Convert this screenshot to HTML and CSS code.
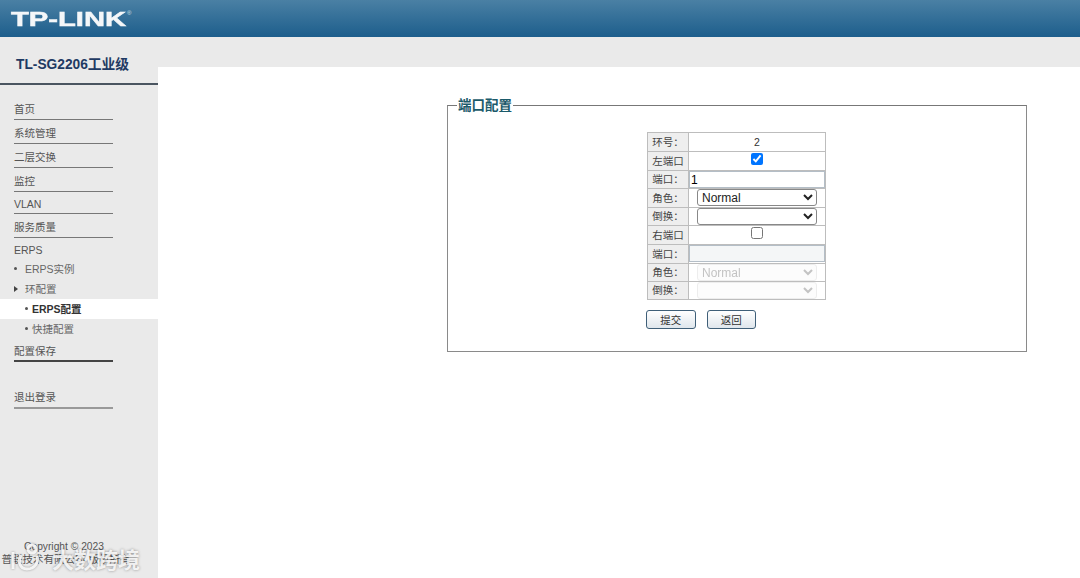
FILE: index.html
```html
<!DOCTYPE html>
<html lang="zh-CN">
  <head>
    <meta charset="UTF-8" />
    <title>TL-SG2206</title>
    <link rel="stylesheet" href="styles.css">
  </head>
  <body>
    <!-- Top banner -->
    <header class="banner">
      <span class="logo">TP-LINK</span><span class="logo-reg">®</span>
    </header>
    <div class="top-gap"></div>

    <div class="page">
      <!-- Left menu -->
      <aside class="sidebar">
        <h1 class="model">TL-SG2206工业级</h1>
        <nav class="menu">
          <a class="item">首页</a>
          <a class="item">系统管理</a>
          <a class="item">二层交换</a>
          <a class="item">监控</a>
          <a class="item short">VLAN</a>
          <a class="item">服务质量</a>
          <a class="item open">ERPS</a>
          <a class="sub"><span class="dot"></span>ERPS实例</a>
          <a class="sub"><span class="arrow"></span>环配置</a>
          <a class="leaf active"><span class="dot"></span>ERPS配置</a>
          <a class="leaf"><span class="dot"></span>快捷配置</a>
          <a class="item save">配置保存</a>
          <a class="item logout">退出登录</a>
        </nav>
        <div class="copyright">
          <div class="copy-en">Copyright © 2023</div>
          <div>普联技术有限公司 版权所有</div>
        </div>
      </aside>

      <!-- Content -->
      <main class="content">
        <fieldset class="panel">
          <legend>端口配置</legend>
          <table class="form-table">
            <tr>
              <th>环号：</th>
              <td class="center ring">2</td>
            </tr>
            <tr>
              <th>左端口</th>
              <td class="center"><input type="checkbox" checked></td>
            </tr>
            <tr class="thin">
              <th>端口：</th>
              <td><input class="text" type="text" value="1"></td>
            </tr>
            <tr>
              <th>角色：</th>
              <td class="center"><select><option>Normal</option></select></td>
            </tr>
            <tr class="thin">
              <th>倒换：</th>
              <td class="center"><select><option></option></select></td>
            </tr>
            <tr>
              <th>右端口</th>
              <td class="center"><input type="checkbox"></td>
            </tr>
            <tr>
              <th>端口：</th>
              <td><input class="text" type="text" disabled></td>
            </tr>
            <tr class="thin">
              <th>角色：</th>
              <td class="center"><select disabled><option>Normal</option></select></td>
            </tr>
            <tr class="thin">
              <th>倒换：</th>
              <td class="center"><select disabled><option></option></select></td>
            </tr>
          </table>
          <div class="actions">
            <button class="btn">提交</button>
            <button class="btn">返回</button>
          </div>
        </fieldset>
      </main>
    </div>

    <!-- Image watermark -->
    <div class="watermark">
      <svg class="wm-icon" width="36" height="30" viewBox="0 0 36 30">
        <path d="M5 9v17" />
        <path d="M13 12c-3 5-2 14 6 14 8 0 12-7 10-13" />
        <circle cx="24" cy="6" r="4" />
      </svg>
      <span>大数跨境</span>
    </div>
  </body>
</html>
```

FILE: styles.css
```css
* {
  margin: 0;
  padding: 0;
  box-sizing: border-box;
}

html,
body {
  height: 100%;
}

body {
  position: relative;
  display: flex;
  flex-direction: column;
  overflow: hidden;
  background-color: #eaeaea;
  font-family: "Liberation Sans", "Noto Sans CJK SC", sans-serif;
  font-size: 12px;
  color: #333;
}

/* Top banner */
.banner {
  height: 37px;
  flex: none;
  padding-left: 11px;
  background: linear-gradient(#4a80a4, #1d5e8c);
  display: flex;
  align-items: flex-start;
}

.logo {
  width: 79px;
  margin-top: 7px;
  font-size: 20px;
  line-height: 24px;
  font-weight: bold;
  color: #f4f7f9;
  -webkit-text-stroke: 0.5px #f4f7f9;
  transform: scaleX(1.46);
  transform-origin: left;
}

.logo-reg {
  margin: 10px 0 0 37px;
  font-size: 6px;
  color: #d5e0e8;
}

.top-gap {
  height: 30px;
  flex: none;
}

.page {
  flex: 1;
  display: flex;
  min-height: 0;
}

/* Left menu */
.sidebar {
  width: 158px;
  flex: none;
  display: flex;
  flex-direction: column;
  margin-top: -30px;
}

.model {
  height: 48px;
  padding: 10px 0 0 16px;
  border-bottom: 2px solid #4a5560;
  font-size: 13.75px;
  line-height: 36px;
  color: #1f3a63;
}

.menu {
  display: flex;
  flex-direction: column;
  padding-top: 11px;
}

.item {
  display: block;
  width: 99px;
  height: 24px;
  margin-left: 14px;
  padding-top: 2px;
  border-bottom: 1px solid #777;
  font-size: 10.5px;
  line-height: 22px;
  color: #555;
}

.item.short {
  height: 22px;
  line-height: 20px;
}

.item.open {
  height: 21px;
  padding-top: 0;
  border-bottom: 0;
  line-height: 24px;
}

.item.save {
  height: 23px;
  padding-top: 0;
  border-bottom: 2px solid #444;
  line-height: 24px;
}

.item.logout {
  margin-top: 23px;
  padding-top: 0;
  border-bottom: 2px solid #999;
  line-height: 24px;
}

.sub,
.leaf {
  display: flex;
  align-items: center;
  height: 20px;
  padding-bottom: 1px;
  font-size: 10.5px;
  color: #666;
}

.sub {
  padding-left: 14px;
}

.leaf {
  padding-left: 25px;
}

.leaf.active {
  background-color: #fff;
  font-weight: bold;
  color: #333;
}

.dot {
  width: 3px;
  height: 3px;
  margin-right: 8px;
  border-radius: 50%;
  background-color: #555;
}

.leaf .dot {
  margin-right: 4px;
}

.arrow {
  width: 0;
  height: 0;
  margin-right: 7px;
  border-left: 4px solid #444;
  border-top: 3.5px solid transparent;
  border-bottom: 3.5px solid transparent;
}

.copyright {
  margin-top: auto;
  padding: 0 26px 12px 0;
  text-align: center;
  font-size: 10.5px;
  line-height: 13px;
  white-space: nowrap;
  color: #555;
}

.copy-en {
  margin-right: 4px;
  font-size: 10.25px;
}

/* Content */
.content {
  flex: 1;
  background-color: #fff;
  padding: 29px 53px 0 289px;
}

.panel {
  height: 256px;
  padding: 0;
  border: 1px solid #8a8a8a;
  border-top-color: #777;
}

.panel legend {
  margin-left: 9px;
  padding: 2px 1px 0;
  font-size: 13.5px;
  line-height: 16px;
  font-weight: bold;
  color: #1a5a6a;
}

.form-table {
  width: 179px;
  margin: 18px 0 0 199px;
  border-collapse: collapse;
  font-size: 10.5px;
}

.form-table th,
.form-table td {
  height: 19px;
  padding: 0;
  border: 1px solid #bdbdbd;
  font-weight: normal;
}

.form-table td {
  vertical-align: top;
}

.form-table .thin th,
.form-table .thin td {
  height: 18px;
}

.form-table th {
  width: 41px;
  padding-bottom: 2px;
  background-color: #eee;
  text-align: center;
  color: #444;
}

.form-table td.center {
  text-align: center;
}

.form-table td.ring {
  line-height: 18px;
}

.form-table input[type="checkbox"] {
  display: block;
  width: 12px;
  height: 12px;
  margin: 1px auto 0;
}

.form-table select {
  display: block;
  width: 120px;
  height: 17px;
  margin: 0 auto;
  border-radius: 3px;
  background-color: #fff;
  font-family: "Liberation Sans", sans-serif;
  font-size: 12px;
}

.form-table select:enabled {
  border: 1px solid #888;
  color: #222;
}

.form-table select:disabled {
  border: 1px solid #e6e6e6;
  background-color: #fbfbfb;
  color: #aaa;
}

.text {
  display: block;
  width: 100%;
  height: 17px;
  padding-left: 1px;
  border: 1px solid #b4bec7;
  font-family: "Liberation Sans", sans-serif;
  font-size: 12px;
  background-color: #fff;
}

.text:disabled {
  background-color: #f4f6f7;
}

.actions {
  display: flex;
  gap: 11px;
  margin: 10px 0 0 198px;
}

.btn {
  width: 49.5px;
  height: 19px;
  border: 1px solid #3f5f78;
  border-radius: 3px;
  background: linear-gradient(#fff, #dfe6ec);
  font-family: "Noto Sans CJK SC", sans-serif;
  font-size: 10.5px;
  color: #333;
}

/* Image watermark */
.watermark {
  position: absolute;
  left: 8px;
  bottom: 5px;
  display: flex;
  align-items: center;
  gap: 8px;
  font-family: "Noto Sans CJK SC", sans-serif;
  font-size: 22px;
  line-height: 26px;
  font-weight: bold;
  color: rgba(255, 255, 255, 0.85);
  text-shadow: 0 0 3px rgba(0, 0, 0, 0.4);
}

.wm-icon {
  fill: none;
  stroke: rgba(255, 255, 255, 0.85);
  stroke-width: 3;
  filter: drop-shadow(0 0 1px rgba(0, 0, 0, 0.4));
}
```
